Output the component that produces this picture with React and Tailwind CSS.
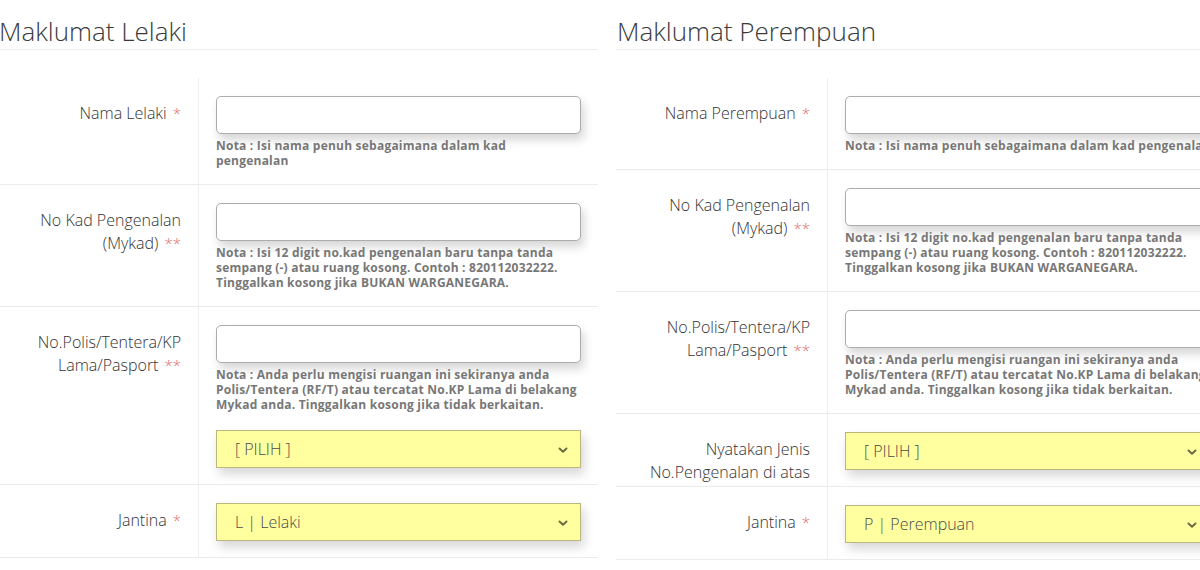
import React from "react";

const Req = ({ n = 1 }) => (
  <span className="text-[#dc6a6a] ml-[6px] text-[15px]">{"*".repeat(n)}</span>
);

const Chevron = () => (
  <svg width="10" height="7" viewBox="0 0 10 7" className="absolute right-[12px] top-[16px]">
    <path d="M1.5 1.5 L5 4.8 L8.5 1.5" fill="none" stroke="#6e6c42" strokeWidth="2" strokeLinecap="round" strokeLinejoin="round" />
  </svg>
);

const TextInput = () => (
  <div className="h-[38px] w-full bg-white border border-[#acacac] rounded-[5px] shadow-[3px_6px_10px_rgba(0,0,0,0.16)]" />
);

const Select = ({ value, chevron = true }) => (
  <div className="relative h-[38px] w-full bg-[#ffffa0] border border-[#bab67e] shadow-[3px_6px_10px_rgba(0,0,0,0.16)] flex items-center pl-[18px] text-[16px] font-light text-[#4a4a4a]">
    {value}
    {chevron && <Chevron />}
  </div>
);

const Note = ({ lines }) => (
  <div className="mt-[4px] text-[12px] font-bold leading-[15px] tracking-[0.22px] text-[#777] whitespace-nowrap">
    {lines.map((l, i) => (
      <div key={i}>{l}</div>
    ))}
  </div>
);

const Row = ({ labelW, label, children }) => (
  <div className="flex border-b border-[#ebebeb]">
    <div
      className="shrink-0 border-r border-[#eeeeee] text-right pr-[17px] pt-[24px] text-[16px] font-light leading-[23px] text-[#333]"
      style={{ width: labelW }}
    >
      {label}
    </div>
    <div className="flex-1 min-w-0 px-[17px] pt-[18px] pb-[16px]">{children}</div>
  </div>
);

const noteKP = [
  "Nota : Isi 12 digit no.kad pengenalan baru tanpa tanda",
  "sempang (-) atau ruang kosong. Contoh : 820112032222.",
  "Tinggalkan kosong jika BUKAN WARGANEGARA.",
];
const notePolis = [
  "Nota : Anda perlu mengisi ruangan ini sekiranya anda",
  "Polis/Tentera (RF/T) atau tercatat No.KP Lama di belakang",
  "Mykad anda. Tinggalkan kosong jika tidak berkaitan.",
];

export default function App() {
  return (
    <div
      className="w-[1200px] h-[570px] overflow-hidden bg-white flex"
      style={{ fontFamily: '"Open Sans", "Noto Sans", sans-serif' }}
    >
      {/* Left panel */}
      <div className="w-[598px] shrink-0">
        <div className="pt-[16px] pb-[3px] border-b border-[#eeeeee] text-[26px] leading-[30px] font-light text-[#3a3a3a] -ml-[1px]">
          Maklumat Lelaki
        </div>
        <div className="mt-[28px]">
          <Row labelW={199} label={<>Nama Lelaki<Req /></>}>
            <TextInput />
            <Note lines={["Nota : Isi nama penuh sebagaimana dalam kad", "pengenalan"]} />
          </Row>
          <Row labelW={199} label={<>No Kad Pengenalan<br />(Mykad)<Req n={2} /></>}>
            <TextInput />
            <Note lines={noteKP} />
          </Row>
          <Row labelW={199} label={<>No.Polis/Tentera/KP<br />Lama/Pasport<Req n={2} /></>}>
            <TextInput />
            <Note lines={notePolis} />
            <div className="mt-[18px]">
              <Select value="[ PILIH ]" />
            </div>
          </Row>
          <Row labelW={199} label={<>Jantina<Req /></>}>
            <Select value="L | Lelaki" />
          </Row>
        </div>
      </div>

      {/* Right panel */}
      <div className="w-[611px] shrink-0 ml-[18px]">
        <div className="pt-[16px] pb-[3px] border-b border-[#eeeeee] text-[26px] leading-[30px] font-light text-[#3a3a3a] pl-[1px]">
          Maklumat Perempuan
        </div>
        <div className="mt-[28px]">
          <Row labelW={212} label={<>Nama Perempuan<Req /></>}>
            <TextInput />
            <Note lines={["Nota : Isi nama penuh sebagaimana dalam kad pengenalan"]} />
          </Row>
          <Row labelW={212} label={<>No Kad Pengenalan<br />(Mykad)<Req n={2} /></>}>
            <TextInput />
            <Note lines={noteKP} />
          </Row>
          <Row labelW={212} label={<>No.Polis/Tentera/KP<br />Lama/Pasport<Req n={2} /></>}>
            <TextInput />
            <Note lines={notePolis} />
          </Row>
          <Row labelW={212} label={<>Nyatakan Jenis<br />No.Pengenalan di atas</>}>
            <Select value="[ PILIH ]" />
          </Row>
          <Row labelW={212} label={<>Jantina<Req /></>}>
            <Select value="P | Perempuan" />
          </Row>
        </div>
      </div>
    </div>
  );
}
